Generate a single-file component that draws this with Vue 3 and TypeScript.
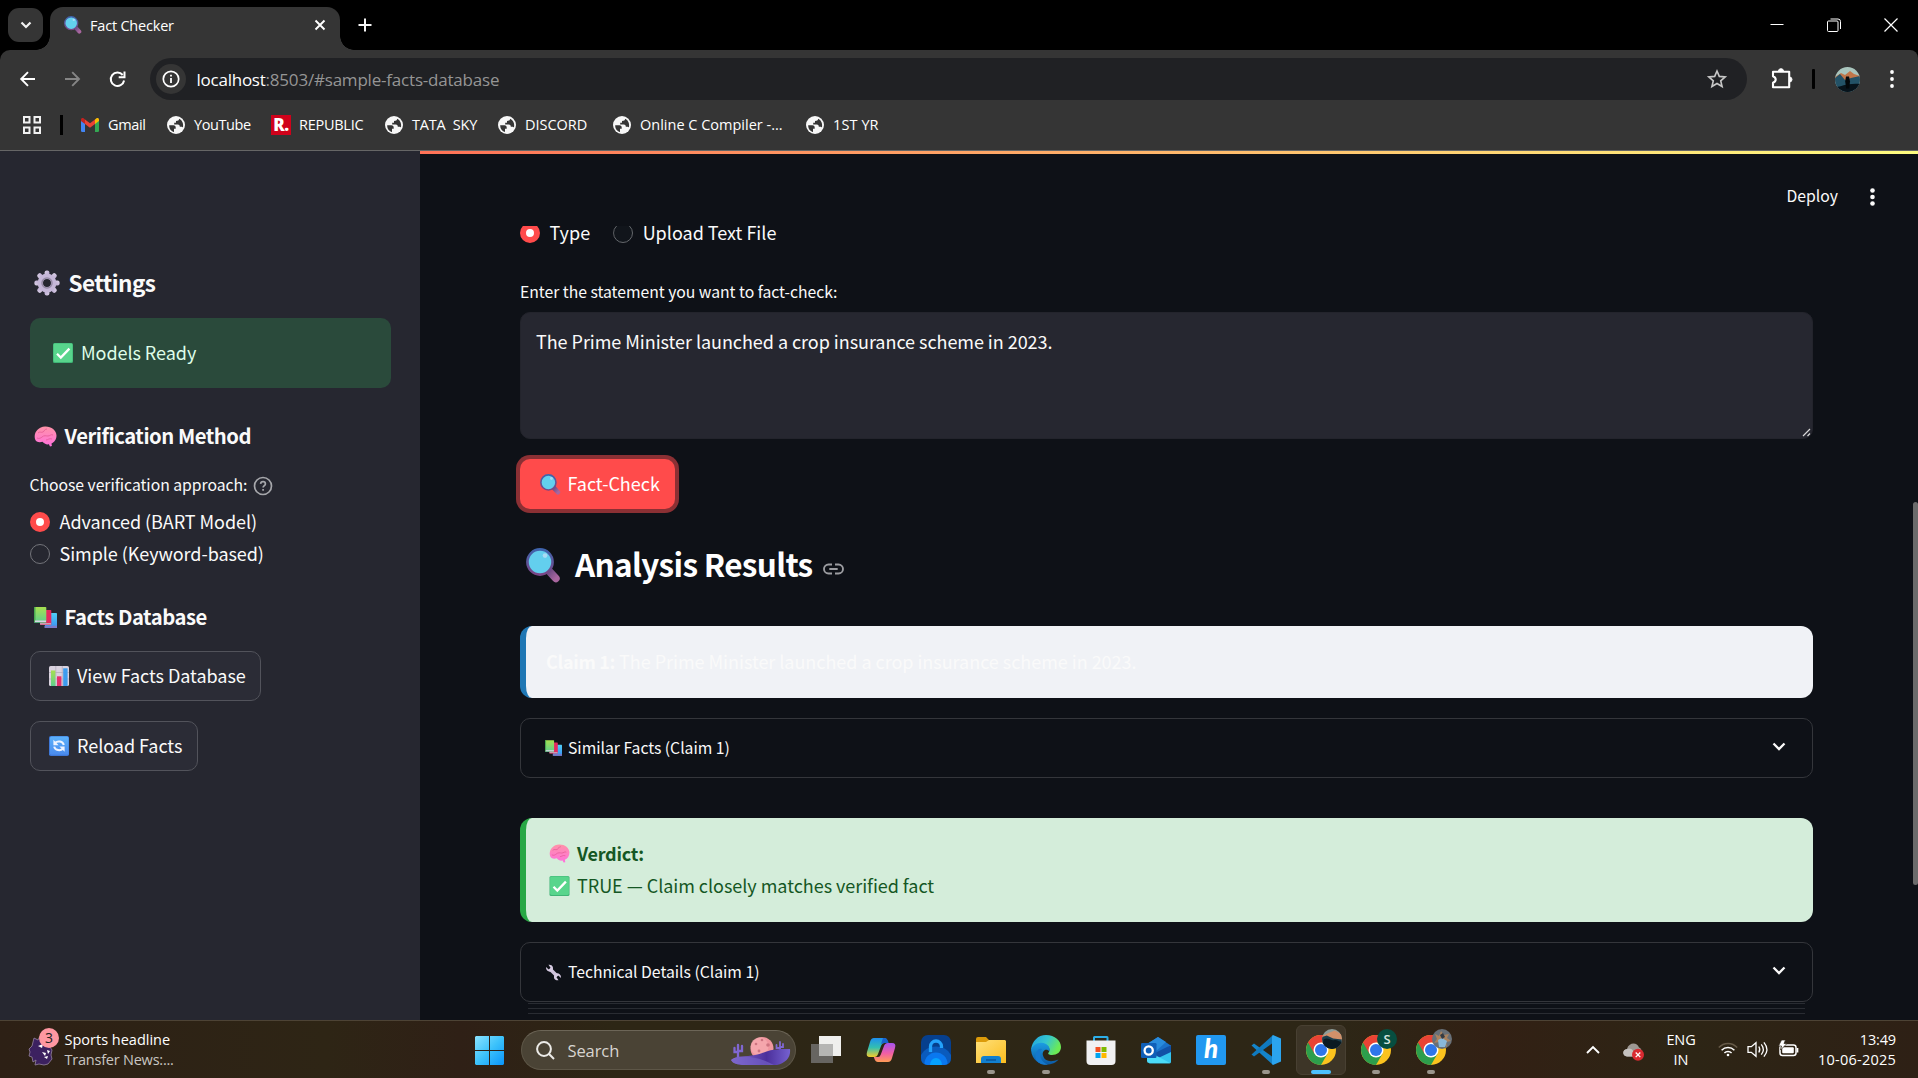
<script setup lang="ts">
interface Bookmark { label: string; icon: 'gmail' | 'globe' | 'republic'; width: number; spacing: number }
interface TaskApp { id: string; running?: boolean; active?: boolean }

const bookmarks: Bookmark[] = [
  { label: 'Gmail', icon: 'gmail', width: 86, spacing: -0.34 },
  { label: 'YouTube', icon: 'globe', width: 103, spacing: -0.4 },
  { label: 'REPUBLIC', icon: 'republic', width: 115, spacing: -0.26 },
  { label: 'TATA  SKY', icon: 'globe', width: 113, spacing: -0.18 },
  { label: 'DISCORD', icon: 'globe', width: 115, spacing: -0.04 },
  { label: 'Online C Compiler -...', icon: 'globe', width: 193, spacing: 0 },
  { label: '1ST YR', icon: 'globe', width: 90, spacing: 0.1 },
]

const tasks: TaskApp[] = [
  { id: 'view' }, { id: 'copilot' }, { id: 'lock' }, { id: 'folder', running: true },
  { id: 'edge', running: true }, { id: 'store' }, { id: 'outlook' }, { id: 'h' },
  { id: 'code', running: true }, { id: 'chrome1', active: true },
  { id: 'chrome2', running: true }, { id: 'chrome3', running: true },
]

const gearTeeth = [0, 45, 90, 135, 180, 225, 270, 315]
</script>

<template>
  <div class="screen">
    <!-- Shared glyphs -->
    <svg class="defs" width="0" height="0" aria-hidden="true">
      <defs>
        <linearGradient id="gHandle" x1="0" y1="0" x2="1" y2="1"><stop offset="0" stop-color="#6d4b84" /><stop offset="1" stop-color="#a8669f" /></linearGradient>
        <linearGradient id="gRim" x1="0" y1="0" x2="0" y2="1"><stop offset="0" stop-color="#3f64ad" /><stop offset="1" stop-color="#7a4686" /></linearGradient>
        <linearGradient id="gBrain" x1="0" y1="0" x2="0" y2="1"><stop offset="0" stop-color="#ff93a8" /><stop offset="1" stop-color="#ff70dc" /></linearGradient>
        <linearGradient id="gBook" x1="0" y1="0" x2="0" y2="1"><stop offset="0" stop-color="#a6df4f" /><stop offset="1" stop-color="#5fcf8e" /></linearGradient>
        <linearGradient id="gBlue" x1="0" y1="0" x2="0" y2="1"><stop offset="0" stop-color="#4fd0f7" /><stop offset="1" stop-color="#3a8ff0" /></linearGradient>
        <linearGradient id="gGear" x1="0" y1="0" x2="1" y2="1"><stop offset="0" stop-color="#d9d0e4" /><stop offset="1" stop-color="#b8a4d0" /></linearGradient>
        <linearGradient id="gSync" x1="0" y1="0" x2="0" y2="1"><stop offset="0" stop-color="#5cb2fb" /><stop offset="1" stop-color="#4a8bee" /></linearGradient>
        <linearGradient id="gWin" x1="0" y1="0" x2="1" y2="1"><stop offset="0" stop-color="#8be3ff" /><stop offset=".5" stop-color="#3cc2fb" /><stop offset="1" stop-color="#0a94fa" /></linearGradient>
        <linearGradient id="gEdge" x1="0" y1="0" x2="1" y2=".4"><stop offset="0" stop-color="#1d9fe0" /><stop offset=".55" stop-color="#35c6cf" /><stop offset="1" stop-color="#6bea55" /></linearGradient>
        <linearGradient id="gEdge2" x1="0" y1="0" x2="0" y2="1"><stop offset="0" stop-color="#1b9de2" /><stop offset="1" stop-color="#0c59a4" /></linearGradient>
        <linearGradient id="gFolder" x1="0" y1="0" x2="1" y2="1"><stop offset="0" stop-color="#ffe07a" /><stop offset="1" stop-color="#fbbd1e" /></linearGradient>
        <linearGradient id="gCopA" x1="0" y1="0" x2="0" y2="1"><stop offset="0" stop-color="#1d8ff0" /><stop offset=".5" stop-color="#33bfb0" /><stop offset="1" stop-color="#f6cc2a" /></linearGradient>
        <linearGradient id="gCopB" x1="0" y1="0" x2="0" y2="1"><stop offset="0" stop-color="#a653f0" /><stop offset=".55" stop-color="#f15fa4" /><stop offset="1" stop-color="#ff9c55" /></linearGradient>
        <linearGradient id="gDune" x1="0" y1="0" x2="1" y2="0"><stop offset="0" stop-color="#8b6fd6" /><stop offset=".6" stop-color="#4b2f9b" /><stop offset="1" stop-color="#7561d0" /></linearGradient>
        <clipPath id="cCircle"><circle cx="12.5" cy="12.5" r="12.5" /></clipPath>
        <symbol id="lens" viewBox="0 0 34 34">
          <path d="M22.5 22.5 29 29.5" stroke="url(#gHandle)" stroke-width="7.4" stroke-linecap="round" />
          <circle cx="13.6" cy="13.6" r="12.2" fill="#63cfee" stroke="url(#gRim)" stroke-width="2.6" />
          <circle cx="18.5" cy="7.3" r="2.3" fill="#a9dbf4" />
        </symbol>
        <symbol id="gear" viewBox="0 0 26 26">
          <g fill="url(#gGear)"><rect v-for="a in gearTeeth" :key="a" x="10.6" y="0.4" width="4.8" height="7" rx="2" :transform="`rotate(${a} 13 13)`" /></g>
          <circle cx="13" cy="13" r="6.7" fill="none" stroke="#c5b7d8" stroke-width="5.4" />
          <circle cx="13" cy="13" r="5" fill="none" stroke="#958aa5" stroke-width="1.5" />
        </symbol>
        <symbol id="check" viewBox="0 0 20 20">
          <rect width="20" height="20" rx="1.6" fill="#3fb476" /><rect x=".6" y=".6" width="18.8" height="18.3" rx="1.4" fill="#58d58c" />
          <path d="M4 10.8 7.8 14.5 16.4 5.6" fill="none" stroke="#fff" stroke-width="2.3" />
        </symbol>
        <symbol id="brain" viewBox="0 0 23 21">
          <path d="M1 13C-.6 7 4 .8 11 .5c6-.3 11.500 3.700 11.500 9 0 4.200-2.300 6.800-5 8l.4 2.600-1.900.3-1.100-2.100c-2.900.4-4.900-.7-6.400-2.500C5.500 16.800 1.800 16.200 1 13Z" fill="url(#gBrain)" />
          <path d="M4 7c2-2 3 0 5-1s1-3 4-3M8 11c2-2 4-1 6-1s3-2 5-1M3 12c2 1 4 0 5-1M12 14c2 0 3-2 6-1" fill="none" stroke="#e0558f" stroke-width="1" stroke-opacity=".7" />
        </symbol>
        <symbol id="books" viewBox="0 0 23 21">
          <rect x="11" y="6" width="12" height="15" rx=".8" fill="url(#gBlue)" /><rect x="10.500" y="18.700" width="12.500" height="2.300" fill="#7a7ac8" />
          <rect x="6" y="3" width="11.300" height="15" rx=".8" fill="#e5285f" /><rect x="6" y="16" width="11" height="1.600" fill="#c9a0b4" />
          <rect x="0" y="0" width="12.300" height="15.700" rx=".8" fill="url(#gBook)" /><rect x="0" y="0" width="1.500" height="15" fill="#4aa850" /><rect x="1" y="13.500" width="11" height="1.500" fill="#d9d5e6" />
        </symbol>
        <symbol id="chart" viewBox="0 0 20 20">
          <rect width="20" height="20" rx="1.600" fill="#d9d2de" /><path d="M0 6.500h20M0 13h20M6.800 0v20M13.300 0v20" stroke="#b5acbd" stroke-width=".8" />
          <rect x="2" y="4.500" width="4.400" height="15.500" fill="url(#gBook)" /><rect x="8" y="10.300" width="4.400" height="9.700" fill="#e5306d" /><rect x="14.200" y="2.300" width="4.400" height="17.700" fill="#3c9cee" />
        </symbol>
        <symbol id="sync" viewBox="0 0 20 20">
          <rect width="20" height="20" rx="1.800" fill="#3e78d8" /><rect x="1" y=".4" width="18.600" height="18.400" rx="1.600" fill="url(#gSync)" />
          <g fill="none" stroke="#eef4ff" stroke-width="2"><path d="M6 6.800c2.600-2.200 8-1.800 8.800 2.200" /><path d="M14 12.800c-2.600 2.200-8 1.800-8.800-2.200" /></g>
          <path d="M4.400 3.800v5.400h5.200ZM15.600 15.800v-5.400h-5.200Z" fill="#eef4ff" />
        </symbol>
        <symbol id="wrench" viewBox="0 0 18 18">
          <path d="M5 5 13 13" stroke="#cfc3dc" stroke-width="3.800" />
          <path d="M1 3.200 4 5.900l2-1.700L3.700.8C8 .2 9.700 4 7.700 7 5.500 9.300.8 7.900 1 3.200ZM17 14.800 14 12.100l-2 1.700 2.300 3.400c-4.300.6-6-3.200-4-6.200 2.200-2.300 6.900-.9 6.700 3.800Z" fill="#d6cbe2" />
        </symbol>
        <symbol id="globe" viewBox="0 0 18 18">
          <circle cx="9" cy="9" r="9" fill="#f7f7f7" />
          <path d="M2.200 9.300h4.300c1.500 0 2.200 1 2.200 2.200v1.300H7v3.300C4.200 15.200 2 12.800 2.200 9.300ZM12.200 2.800c-.2 1.500-1.200 2.200-3.200 2.200v1.800H7.200v1.700h3.600c1.500 0 2 1 2 2.200h1.800c.6 0 1.100.3 1.300.8.900-3.300-.3-7-3.700-8.700Z" fill="#353535" />
        </symbol>
        <symbol id="chrome" viewBox="0 0 30 30">
          <circle cx="15" cy="15" r="15" fill="#fcc31e" />
          <path d="M2.010 7.500A15 15 0 0 0 15 30l6.500-11.200L15 15Z" fill="#2d9e4c" />
          <path d="M2.010 7.500A15 15 0 0 1 28 7.500H15L8.500 18.700Z" fill="#ea4335" />
          <circle cx="15" cy="15" r="7.500" fill="#fff" /><circle cx="15" cy="15" r="6" fill="#2f76ea" />
        </symbol>
        <symbol id="photo" viewBox="0 0 25 25">
          <g clip-path="url(#cCircle)">
            <rect width="25" height="25" fill="#a9c5bd" /><path d="M0 10 6 6l4 2 5-4 4 3 6 2v6H0Z" fill="#c0764a" />
            <path d="M0 11 5 7l5 6 6-2 9-2v16H0Z" fill="#235267" /><path d="M0 20c7 0 11-4 25-3v8H0Z" fill="#07131b" /><path d="M11 9.500h3l1 5-.8 7h-3l-1-7Z" fill="#03070a" />
          </g>
        </symbol>
        <symbol id="photo2" viewBox="0 0 25 25">
          <g clip-path="url(#cCircle)">
            <rect width="25" height="25" fill="#8e9c98" /><path d="M0 9 8 5l8-3 9 5v8H0Z" fill="#d0906a" />
            <path d="M0 10 6 8l8 4 11 1v12H0Z" fill="#1b3d4c" /><path d="M2 13c6-3 9 2 13 1s6 2 10 2v9H0Z" fill="#0b1a22" />
          </g>
        </symbol>
      </defs>
    </svg>

    <!-- Browser chrome -->
    <header class="tabstrip">
      <button class="tab-search"><svg width="12" height="8" viewBox="0 0 12 8"><path d="m1.500 1.500 4.500 4.500 4.500-4.500" fill="none" stroke="#f2f2f2" stroke-width="2.200" /></svg></button>
      <div class="tab">
        <svg class="fav" width="18" height="18"><use href="#lens" /></svg>
        <span class="tab-title">Fact Checker</span>
        <svg class="tab-close" width="12" height="12" viewBox="0 0 12 12"><path d="m1.500 1.500 9 9m0-9-9 9" stroke="#fff" stroke-width="1.900" /></svg>
      </div>
      <svg class="newtab" width="14" height="14" viewBox="0 0 14 14"><path d="M7 .5v13M.5 7h13" stroke="#f5f5f5" stroke-width="2" /></svg>
      <div class="win">
        <svg width="14" height="14" viewBox="0 0 14 14"><path d="M.5 6.500h13" stroke="#fff" stroke-width="1" /></svg>
        <svg width="14" height="14" viewBox="0 0 14 14" fill="none" stroke="#fff"><rect x=".5" y="3" width="10.500" height="10.500" rx="1" /><path d="M3.500 1H11q2.500 0 2.500 2.500V11" /></svg>
        <svg width="14" height="14" viewBox="0 0 14 14"><path d="m.5.500 13 13m0-13-13 13" stroke="#fff" stroke-width="1.200" /></svg>
      </div>
    </header>

    <div class="chrome-body">
      <div class="toolbar">
        <svg class="nav" width="16" height="16" viewBox="0 0 16 16" fill="none" stroke="#fff" stroke-width="1.900"><path d="M15 8H1.500M8 1.200 1.200 8 8 14.800" /></svg>
        <svg class="nav" width="16" height="16" viewBox="0 0 16 16" fill="none" stroke="#858585" stroke-width="1.900"><path d="M0 8h13.700M7.200 1.200 14 8l-6.800 6.800" /></svg>
        <svg class="nav" width="16" height="16" viewBox="0 0 16 16" fill="none" stroke="#fff" stroke-width="2"><path d="M12.700 4A6.700 6.700 0 1 0 14.100 9.500" /><path d="M14.500.5v5.800H8.700" /></svg>
        <div class="omnibox">
          <span class="info"><svg width="18" height="18" viewBox="0 0 18 18"><circle cx="9" cy="9" r="7.700" fill="none" stroke="#fff" stroke-width="1.700" /><path d="M9 8v5M9 4.800v1.800" stroke="#fff" stroke-width="1.800" /></svg></span>
          <span class="url"><span class="host">localhost</span><span class="path">:8503/#sample-facts-database</span></span>
          <svg class="star" width="20" height="20" viewBox="0 0 20 20"><path d="m10 2 2.300 5.400 5.900.5-4.500 3.900 1.400 5.700-5.100-3-5.100 3 1.400-5.700-4.500-3.900 5.900-.5Z" fill="none" stroke="#c7c7c7" stroke-width="1.600" /></svg>
        </div>
        <svg class="puzzle" width="22" height="22" viewBox="0 0 22 22"><path d="M2 3.700h16.200v15.600H2v-4.600c3.600-1.700 3.600-4.900 0-6.500Z" fill="none" stroke="#fff" stroke-width="2.100" stroke-linejoin="round" /><path d="M7.500 3.200a2.500 2.500 0 0 1 5 0ZM18.500 9a2.500 2.500 0 0 1 0 5Z" fill="#fff" stroke="#fff" /></svg>
        <i class="bar"></i>
        <svg class="avatar" width="25" height="25"><use href="#photo" /></svg>
        <svg class="menu" width="4" height="18" viewBox="0 0 4 18" fill="#fff"><circle cx="2" cy="2" r="1.900" /><circle cx="2" cy="9" r="1.900" /><circle cx="2" cy="16" r="1.900" /></svg>
      </div>
      <div class="bookmarks">
        <svg class="apps" width="18" height="18" viewBox="0 0 18 18" fill="none" stroke="#f2f2f2" stroke-width="2"><path d="M1 1h5.500v5.500H1ZM11.500 1H17v5.500h-5.500ZM1 11.500h5.500V17H1ZM11.500 11.500H17V17h-5.500Z" /></svg>
        <i class="bsep"></i>
        <div v-for="b in bookmarks" :key="b.label" class="bm" :style="{ width: b.width + 'px' }">
          <svg v-if="b.icon === 'gmail'" class="bi" width="18" height="14" viewBox="0 0 18 14"><path d="M0 2.500v10.300q0 1.200 1.200 1.200H4V5Z" fill="#4285f4" /><path d="M18 2.500v10.300q0 1.200-1.200 1.200H14V5Z" fill="#34a853" /><path d="M14 1.500V6l4-3V1.800C18 .2 16.500-.5 15.200.5Z" fill="#fbbc04" /><path d="M4 1.500V6L0 3V1.800C0 .2 1.500-.5 2.800.5Z" fill="#c5221f" /><path d="M4 1.500 9 5.300l5-3.800V6L9 9.800 4 6Z" fill="#ea4335" /></svg>
          <span v-else-if="b.icon === 'republic'" class="rep">R.</span>
          <svg v-else class="bi" width="18" height="18"><use href="#globe" /></svg>
          <span :style="{ letterSpacing: b.spacing + 'px' }">{{ b.label }}</span>
        </div>
      </div>
    </div>

    <!-- Streamlit page -->
    <div class="page">
      <aside class="side">
        <h2 class="s-title"><svg width="26" height="26"><use href="#gear" /></svg><span>Settings</span></h2>
        <div class="ready"><svg width="20" height="20"><use href="#check" /></svg><span>Models Ready</span></div>
        <h3 class="s-sub vm"><svg width="23" height="21"><use href="#brain" /></svg><span>Verification Method</span></h3>
        <div class="s-label">
          <span>Choose verification approach:</span>
          <svg width="20" height="20" viewBox="0 0 20 20" fill="none" stroke="#a6a7ab" stroke-width="1.700"><circle cx="10" cy="10" r="8.500" /><path d="M7.600 7.900c.2-3 4.800-3 4.800 0 0 1.600-2.300 1.800-2.300 3.600M10.100 12.900v1.800" /></svg>
        </div>
        <label class="radio r1"><i class="dot on"></i><span>Advanced (BART Model)</span></label>
        <label class="radio"><i class="dot"></i><span>Simple (Keyword-based)</span></label>
        <h3 class="s-sub fd"><svg width="23" height="21"><use href="#books" /></svg><span>Facts Database</span></h3>
        <button class="btn b1"><svg width="20" height="20"><use href="#chart" /></svg><span>View Facts Database</span></button>
        <button class="btn b2"><svg width="20" height="20"><use href="#sync" /></svg><span>Reload Facts</span></button>
      </aside>

      <main class="main">
        <div class="deco"></div>
        <div class="appbar">
          <span>Deploy</span>
          <svg width="5" height="18" viewBox="0 0 5 18" fill="#fafafa"><circle cx="2.500" cy="2.500" r="2.300" /><circle cx="2.500" cy="9" r="2.300" /><circle cx="2.500" cy="15.500" r="2.300" /></svg>
        </div>
        <div class="scroll">
          <div class="content">
            <div class="choices">
              <label class="radio"><i class="dot on"></i><span>Type</span></label>
              <label class="radio"><i class="dot dk"></i><span>Upload Text File</span></label>
            </div>
            <div class="field-label">Enter the statement you want to fact-check:</div>
            <div class="area">
              <span>The Prime Minister launched a crop insurance scheme in 2023.</span>
              <svg class="grip" width="9" height="9" viewBox="0 0 9 9"><path d="M1 8 8 1M5.500 8 8 5.500" stroke="#d8d8d8" stroke-width="1.200" /></svg>
            </div>
            <button class="primary"><svg width="21" height="21"><use href="#lens" /></svg><span>Fact-Check</span></button>
            <h2 class="heading">
              <svg class="big" width="35" height="35"><use href="#lens" /></svg><span>Analysis Results</span>
              <svg class="link" width="21" height="12" viewBox="0 0 21 12" fill="none" stroke="#9c9da1" stroke-width="1.900"><path d="M9 1.500H5.500a4.500 4.500 0 0 0 0 9H9M12 1.500h3.500a4.500 4.500 0 0 1 0 9H12M6.300 6h8.400" /></svg>
            </h2>
            <div class="claim"><b>Claim 1:</b><span>The Prime Minister launched a crop insurance scheme in 2023.</span></div>
            <div class="expander e1">
              <svg width="17" height="16"><use href="#books" /></svg><span>Similar Facts (Claim 1)</span>
              <svg class="chev" width="14" height="9" viewBox="0 0 14 9"><path d="m1.500 1.500 5.500 5.500 5.500-5.500" fill="none" stroke="#fafafa" stroke-width="2.300" /></svg>
            </div>
            <div class="verdict">
              <div><svg width="21" height="19"><use href="#brain" /></svg><b>Verdict:</b></div>
              <div><svg width="20" height="20"><use href="#check" /></svg><span>TRUE — Claim closely matches verified fact</span></div>
            </div>
            <div class="expander e2">
              <svg width="17" height="17"><use href="#wrench" /></svg><span>Technical Details (Claim 1)</span>
              <svg class="chev" width="14" height="9" viewBox="0 0 14 9"><path d="m1.500 1.500 5.500 5.500 5.500-5.500" fill="none" stroke="#fafafa" stroke-width="2.300" /></svg>
            </div>
            <div class="stack"><i></i><i></i><i></i></div>
          </div>
        </div>
        <i class="thumb"></i>
      </main>
    </div>

    <!-- Windows taskbar -->
    <footer class="taskbar">
      <div class="widget">
        <div class="lion">
          <svg width="26" height="32" viewBox="0 0 26 32"><path d="m7 4 4 2 2-4 3 4 5 4 4 6-1 5 1 4-4 5-4 1-5-1-4 1 1-5-3 2-1-5-3-1 1-4-1-3 3-3 1-4Z" fill="#3c2160" stroke="#95849f" stroke-width=".8" /><path d="m11 12 5-2-1 4ZM15 18l4 1-1 3ZM20 16l3 1-2 3ZM17 23l4-1-1 3Z" fill="#fff" /></svg>
          <span class="badge">3</span>
        </div>
        <div class="news"><span class="n1">Sports headline</span><span class="n2">Transfer News:...</span></div>
      </div>
      <svg class="start" width="29" height="29" viewBox="0 0 29 29" fill="url(#gWin)"><path d="M1 0h13v14H0V1ZM15 0h13l1 1v13H15ZM0 15h14v14H1l-1-1ZM15 15h14v13l-1 1H15Z" /></svg>
      <div class="search">
        <svg width="19" height="19" viewBox="0 0 19 19" fill="none" stroke="#ecebe8" stroke-width="2"><circle cx="8" cy="8" r="6.900" /><path d="m12.800 12.800 5.200 5.200" /></svg>
        <span>Search</span>
        <svg class="scene" width="62" height="30" viewBox="0 0 62 30">
          <circle cx="32" cy="12.500" r="11.500" fill="#f0969f" /><circle cx="29.500" cy="10.500" r="9" fill="#f8b0b6" fill-opacity=".6" /><g fill="#cd7480"><circle cx="32" cy="4" r="1.300" /><circle cx="38" cy="9" r="1.800" /><circle cx="26" cy="8" r="1.300" /><circle cx="29" cy="15" r="1.400" /></g>
          <g fill="none" stroke="#8067d2" stroke-width="2.300" stroke-linecap="round"><path d="M8 21V9M4.500 12v4H8M12 10v5H8" /><path d="M50 15V6M46.500 9v3H50M53 8v3h-3" stroke-width="1.800" /></g>
          <path d="M1 24c5-5 15-3 24-5 8-1 12-7 35-6 1 8-4 14-13 16H12C5 28 3 27 1 24Z" fill="url(#gDune)" /><path d="M1 24c10-5 24-5 43 5H12C5 28 3 27 1 24Z" fill="#7764c8" fill-opacity=".65" />
        </svg>
      </div>
      <div class="apps-row">
        <div v-for="t in tasks" :key="t.id" class="cell">
          <div class="tile" :class="{ active: t.active }">
            <svg v-if="t.id === 'view'" width="30" height="30" viewBox="0 0 30 30"><path d="M8 1h22v20H8Z" fill="#efefed" /><path d="M0 9h22v19H0Z" fill="#777" fill-opacity=".78" /><path d="M8 9h14v12H8Z" fill="#b5b5b3" /></svg>
            <svg v-else-if="t.id === 'copilot'" width="30" height="28" viewBox="0 0 30 28"><path d="M8 2h10q2.500 0 3.500 3l.7 2H18q-2 0-2.800 2.500l-3 8q-1 3.500-4 3.500H4q-4.500 0-3-5L4 6q1-4 4-4Z" fill="url(#gCopA)" /><path d="M17 2h2q2 0 3 3l.7 2H18l-3 1Z" fill="#1763cf" /><path d="M22 26H12q-2.500 0-3.500-3l-.7-2H12q2 0 2.800-2.500l3-8q1-3.500 4-3.500H26q4.500 0 3 5l-3 10q-1 4-4 4Z" fill="url(#gCopB)" /></svg>
            <svg v-else-if="t.id === 'lock'" width="30" height="30" viewBox="0 0 30 30"><rect width="30" height="30" rx="7" fill="#063f8d" /><path d="M0 20a16 13 0 0 1 30 0v3q0 7-7 7H7q-7 0-7-7Z" fill="#0a5bbd" /><path d="M9.500 17v-5.500a5.500 5.500 0 0 1 11 0V13" fill="none" stroke="#23a2fb" stroke-width="3.300" /><path d="M3.500 29a11.500 11.500 0 0 1 23 0l-3 1h-17Z" fill="#0a78f0" /><path d="M9 30a6 7 0 0 1 12 0Z" fill="#05a2ff" /></svg>
            <svg v-else-if="t.id === 'folder'" width="30" height="28" viewBox="0 0 30 28"><path d="M0 3q0-2 2-2h8l3 3h16v9H0Z" fill="#dc9b0a" /><path d="M0 6h10l3-2h16l1 1v22H0Z" fill="url(#gFolder)" /><path d="M5 27v-4q0-3 3-3h14q3 0 3 3v4Z" fill="#1280cf" /><path d="M10 24h10" stroke="#0a4f92" stroke-width="1.300" /></svg>
            <svg v-else-if="t.id === 'edge'" width="30" height="30" viewBox="0 0 30 30"><path d="M0 15C1 6 7 0 15 0c9 0 15 6 15 12 0 5-4 8-9 8-3 0-5-1-3-3 3-7-10-12-18-2Z" fill="url(#gEdge)" /><path d="M0 15c2-6 9-9 15-6 3 1.500 4.500 5 3.500 7.500-3-4-8-1-6.500 4 1.500 6 8 7 15.500 4C22 32 2 33 0 15Z" fill="url(#gEdge2)" /><path d="M11 14c-4 6-1 13 6 15.700C8 31 1 24 6 16q2-3 5-2Z" fill="#1478cc" /></svg>
            <svg v-else-if="t.id === 'store'" width="30" height="30" viewBox="0 0 30 30"><path d="M8 6V2.500Q8 2 8.500 2h12.500q.5 0 .5.500V6" fill="none" stroke="#2dafe8" stroke-width="2" /><path d="M.5 5.500h29V26q0 4-4 4h-21q-4 0-4-4Z" fill="#f1f1f2" /><path d="M9.500 12h5v5h-5Z" fill="#f25022" /><path d="M15.500 12h5v5h-5Z" fill="#7fba00" /><path d="M9.500 18h5v5h-5Z" fill="#00a4ef" /><path d="M15.500 18h5v5h-5Z" fill="#ffb900" /></svg>
            <svg v-else-if="t.id === 'outlook'" width="30" height="28" viewBox="0 0 30 28"><path d="m17 1 12 8v8L6 20V8Z" fill="#1a70c8" /><path d="m17 1 8 5L14 16 6 14V8Z" fill="#288bdc" /><path d="M30 9v17q0 1-1.500 1.500H8L17 18Z" fill="#34c4ee" /><path d="M30 9v7L13 24l-3-5Z" fill="#1150a6" /><path d="M6 19h8l15 8H8q-2 0-2-2Z" fill="#4bdcf8" /><rect y="7" width="15.500" height="15" rx="1.200" fill="#0f5fb8" /><circle cx="7.700" cy="14.500" r="4.100" fill="none" stroke="#fff" stroke-width="2.300" /></svg>
            <span v-else-if="t.id === 'h'" class="htile">h</span>
            <svg v-else-if="t.id === 'code'" width="30" height="30" viewBox="0 0 30 30"><path d="M.5 10.500 3 8.500 23 23l-1 7Z" fill="#1484ca" /><path d="M.5 19.500 3 21.500 23 7 22 0Z" fill="#107abf" /><path d="m22 0 8 3.500v23L22 30l-1-1.500V1.500Z" fill="#2ba4ee" /></svg>
            <svg v-else class="ch" width="30" height="30"><use href="#chrome" /></svg>
            <svg v-if="t.id === 'chrome1'" class="who" width="20" height="20"><use href="#photo2" /></svg>
            <span v-else-if="t.id === 'chrome2'" class="who s">S</span>
            <svg v-else-if="t.id === 'chrome3'" class="who" width="20" height="20" viewBox="0 0 20 20"><circle cx="10" cy="10" r="10" fill="#687078" /><path d="m3 5 4 2 2-5 3 4 5-1-2 4 4 3-5 1 1 5-4-3-4 3V13l-5 1 3-4Z" fill="#a9825f" /><path d="m6 11 4-2 5 3-2 6H7Z" fill="#89b8d9" /><path d="m8 6 3-2 2 4-3 2Z" fill="#343b43" /></svg>
            <i v-if="t.running || t.active" class="ind" :class="{ wide: t.active }"></i>
          </div>
        </div>
      </div>
      <div class="tray">
        <svg class="up" width="14" height="9" viewBox="0 0 14 9"><path d="M1 8 7 2l6 6" fill="none" stroke="#fff" stroke-width="1.900" /></svg>
        <svg class="cloud" width="21" height="18" viewBox="0 0 21 18"><path d="M4 13.500C-1 13-1 6.500 4 6c1.500-6.500 10-7.500 12-1.500 3 1 3.500 5 2 9Z" fill="#9d9893" /><path d="M4 13.500C-1 13-1 6.500 4 6c4-2 8 2 7 7.500Z" fill="#c5c2bf" /><circle cx="15" cy="11.800" r="6" fill="#d92a31" /><path d="m12.700 9.500 4.600 4.600m0-4.600-4.600 4.600" stroke="#fff" stroke-width="1.300" /></svg>
        <div class="lang"><span>ENG</span><span>IN</span></div>
        <svg class="wifi" width="20" height="15" viewBox="0 0 20 15" fill="none" stroke="#fff" stroke-width="1.500"><path d="M.8 5.500a12.500 12.500 0 0 1 18.400 0" stroke="#665a48" /><path d="M3.600 8.200a9 9 0 0 1 12.800 0M6.400 11a5 5 0 0 1 7.200 0" /><circle cx="10" cy="13" r="1.300" fill="#fff" stroke="none" /></svg>
        <svg class="vol" width="21" height="17" viewBox="0 0 21 17" fill="none" stroke="#fff" stroke-width="1.300"><path d="M1 5.700h3.300L9 1.700v13.600l-4.700-4H1ZM11.800 5.500q2 3 0 6M14.300 3.300q4 5.200 0 10.400M16.900 1.300q6 7.200 0 14.400" /></svg>
        <svg class="bat" width="21" height="17" viewBox="0 0 21 17"><rect x="2" y="5" width="16" height="10.500" rx="2.500" fill="none" stroke="#fff" stroke-width="1.500" /><rect x="4.200" y="7.200" width="11.600" height="6.100" rx="1" fill="#fff" /><path d="M19.500 8v4.500" stroke="#fff" stroke-width="1.700" /><path d="M3.500 0h4L6 3.500h3L2.500 10l1-4H.5Z" fill="#fff" stroke="#2d2415" stroke-width=".7" /></svg>
        <div class="clock"><span class="hm">13:49</span><span class="dt">10-06-2025</span></div>
      </div>
    </footer>
  </div>
</template>

<style>
html, body { margin: 0; background: #0e1117; overflow: hidden; }
</style>

<style scoped>
* { box-sizing: border-box; }
svg { display: block; flex: none; overflow: visible; }
.defs { position: absolute; }
.screen { width: 1918px; height: 1078px; display: flex; flex-direction: column; background: #000; overflow: hidden; font-family: "Open Sans", "Noto Sans", sans-serif; color: #fff; }
button { border: 0; padding: 0; margin: 0; font: inherit; color: inherit; }
i { display: block; flex: none; }

/* tab strip */
.tabstrip { height: 50px; flex: none; display: flex; background: #000; }
.tab-search { width: 35px; height: 34px; margin: 8px 7px 0 8px; border-radius: 11px; background: #353535; display: flex; align-items: center; justify-content: center; }
.tab { position: relative; width: 290px; height: 43px; margin-top: 7px; padding: 0 14px; border-radius: 13px 13px 0 0; background: #353535; display: flex; align-items: flex-start; }
.tab::before, .tab::after { content: ""; position: absolute; bottom: 0; width: 14px; height: 14px; }
.tab::before { left: -14px; background: radial-gradient(circle at 0 0, transparent 13.500px, #353535 14px); }
.tab::after { right: -14px; background: radial-gradient(circle at 100% 0, transparent 13.500px, #353535 14px); }
.fav { margin-top: 9px; }
.tab-title { margin: 5px 0 0 8px; font-size: 14.500px; line-height: 28px; letter-spacing: -.2px; }
.tab-close { margin: 12px 0 0 auto; }
.newtab { margin: 18px 0 0 18px; }
.win { margin: 17.500px 20px 0 auto; display: flex; gap: 43px; }

/* toolbar */
.chrome-body { height: 101px; flex: none; background: #353535; border-radius: 10px 8px 0 0; border-bottom: 1px solid #666; }
.toolbar { height: 50px; display: flex; align-items: center; padding: 8px 0 0 20px; }
.nav { margin-right: 29px; }
.nav + .nav + .nav { margin-right: 24px; }
.omnibox { width: 1597px; height: 42px; border-radius: 21px; background: #202124; display: flex; align-items: center; padding: 0 20px 0 6px; }
.info { width: 30px; height: 30px; border-radius: 50%; background: #353535; display: flex; align-items: center; justify-content: center; }
.url { margin: 1px 0 0 10.500px; font-size: 17px; line-height: 30px; }
.host { letter-spacing: -.24px; }
.path { color: #959595; letter-spacing: -.2px; }
.star { margin-left: auto; }
.puzzle { margin-left: 23.500px; }
.bar { width: 3px; height: 20px; margin-left: 19px; background: #000; border-radius: 1px; }
.avatar { margin-left: 20px; }
.menu { margin-left: 30.500px; }
.bookmarks { height: 50px; display: flex; align-items: center; font-size: 14.500px; line-height: 30px; padding-left: 23px; }
.bsep { width: 3px; height: 20px; margin: 0 18px 0 19px; background: #000; }
.bm { display: flex; align-items: center; flex: none; white-space: pre; }
.bi { margin-right: 9px; }
.rep { width: 20px; height: 20px; margin: 0 8px 0 1px; background: #d0021b; color: #fff; font: 800 17px/19px "Open Sans", sans-serif; text-align: center; letter-spacing: -.5px; }

/* page */
.page { height: 869px; flex: none; display: flex; font: 18px/30px "Noto Sans CJK SC", "Open Sans", sans-serif; color: #fafafa; background: #0e1117; }
h2, h3 { margin: 0; font-weight: 700; display: flex; align-items: center; }
.side { width: 420px; background: #262730; padding: 0 0 0 30px; }
.s-title { height: 30px; margin-top: 117px; padding-left: 3.500px; font-size: 22.500px; letter-spacing: -.52px; }
.s-title span { margin: -2px 0 0 9px; }
.ready { width: 361px; height: 70px; margin-top: 20px; border-radius: 10px; background: #2a4a3b; color: #dffde9; display: flex; align-items: center; padding: 0 23px; letter-spacing: -.05px; }
.ready span { margin: -2px 0 0 8px; }
.s-sub { height: 30px; padding-left: 3.500px; font-size: 20.250px; letter-spacing: -.47px; }
.s-sub span { margin-left: 8px; }
.vm { margin-top: 33px; }
.s-label { height: 24px; margin-top: 22px; display: flex; align-items: center; font-size: 15.750px; line-height: 24px; letter-spacing: -.04px; }
.s-label svg { margin-left: 6px; margin-top: 1px; }
.s-label span { margin-left: -.5px; }
.radio { display: flex; align-items: center; height: 32px; letter-spacing: -.06px; }
.radio span { margin-top: -2px; }
.r1 { margin-top: 9px; }
.dot { width: 20px; height: 20px; border-radius: 50%; border: 1px solid #73747a; margin-right: 9.500px; }
.dot.dk { border-color: #65686c; background: #11151b; }
.dot.on { border: 6px solid #ff4b4b; background: #fff; }
.fd { margin-top: 33px; }
.fd span { margin-top: -2px; }
.fd svg { margin-top: -1px; }
.btn { display: flex; align-items: center; height: 50px; border: 1px solid #52535b; border-radius: 10px; background: #2b2c36; padding-left: 18px; letter-spacing: -.03px; }
.btn span { margin: -2px 0 0 8px; }
.b1 { width: 231px; margin-top: 18px; }
.b2 { width: 168px; margin-top: 20px; }

.main { position: relative; width: 1498px; display: flex; flex-direction: column; }
.deco { height: 3px; width: 1498px; background: linear-gradient(90deg, #ff7257, #fffd80); flex: none; }
.appbar { height: 72px; flex: none; display: flex; justify-content: flex-end; align-items: center; padding: 13px 43px 0 0; font-size: 15.750px; line-height: 24px; }
.appbar svg { margin-left: 32px; }
.appbar span { margin-top: -1px; }
.scroll { height: 794px; padding-left: 100px; }
.content { width: 1293px; display: flex; flex-direction: column; margin-top: -9px; }
.choices { display: flex; gap: 23px; }
.choices .dot { clip-path: inset(3px 0 0 0); }
.choices .radio { letter-spacing: 0; }
.field-label { height: 24px; margin-top: 31px; font-size: 15.750px; line-height: 24px; letter-spacing: -.03px; }
.area { position: relative; height: 127px; margin-top: 8px; border-radius: 10px; background: #262730; padding: 14px 15px; letter-spacing: -.045px; border: 1px solid #23242c; }
.area span { display: block; margin-top: -1px; }
.grip { position: absolute; right: 1px; bottom: 1px; }
.primary { width: 155px; height: 50px; margin-top: 20px; border-radius: 10px; background: #ff4b4b; box-shadow: 0 0 0 4px #8b3034; display: flex; align-items: center; padding-left: 20px; color: #fff; }
.primary span { margin: -2px 0 0 6.500px; }
.heading { height: 40px; margin-top: 35px; padding-left: 6px; font-size: 31.500px; line-height: 40px; letter-spacing: -.68px; color: #fff; }
.heading span { margin: -2px 0 0 14px; }
.big { margin-top: 3px; }
.link { margin: 9px 0 0 10px; }
.claim { height: 72px; margin-top: 42px; border-radius: 12px; border-left: 6px solid #1f77b4; background: #f0f2f6; padding: 20px; display: flex; letter-spacing: -.03px; }
.claim b { margin-right: 4px; letter-spacing: -.3px; }
.expander { height: 60px; border: 1px solid #34363b; border-radius: 10px; display: flex; align-items: center; padding: 0 26px 0 23.500px; font-size: 15.750px; line-height: 24px; letter-spacing: -.02px; }
.expander span { margin: 0 0 0 6.500px; }
.chev { margin: -3px 0 0 auto; }
.e1, .e2 { margin-top: 20px; }
.verdict { height: 104px; margin-top: 40px; border-radius: 12px; border-left: 6px solid #28a745; background: #d4edda; color: #155724; padding: 19px 23px; line-height: 32px; }
.verdict div { display: flex; align-items: center; letter-spacing: -.035px; }
.verdict svg { width: 21px; margin-top: 1px; }
.verdict b, .verdict span { margin-left: 7px; }
.verdict b { letter-spacing: -.25px; }
.stack { display: flex; flex-direction: column; gap: 4px; padding: 1px 8px 0; }
.stack i { height: 1px; background: #292c32; }
.thumb { position: absolute; right: 0; top: 351px; width: 5px; height: 383px; border-radius: 3px; background: #6b6b6b; }

/* taskbar */
.taskbar { height: 58px; flex: none; border-top: 1px solid #4d4335; display: flex; align-items: center; background: linear-gradient(90deg, #2d2015 0, #2e2515 17%, #2f2016 24%, #2d2615 32%, #2d2616 70%, #322014 78%, #2d2515 88%, #2e2015 100%); font-size: 14.500px; line-height: 20px; }
.widget { width: 475px; display: flex; }
.lion { position: relative; width: 37px; height: 40px; padding: 4px 0 0 27px; }
.badge { position: absolute; left: 39px; top: -2px; width: 20px; height: 20px; border-radius: 50%; background: #ff97a1; color: #222; text-align: center; font-size: 14px; line-height: 20px; }
.news { display: flex; flex-direction: column; margin-left: 27.500px; }
.n2 { color: #c9c6c2; letter-spacing: -.22px; }
.start { margin-right: 17px; margin-top: 1px; }
.search { width: 275px; height: 40px; margin: 1px 2.500px 0 0; border-radius: 20px; border: 1px solid #5d5647; border-top-color: #6c6557; background: #4a4335; display: flex; align-items: center; padding: 0 3px 0 14px; font-size: 16.500px; color: #d8d5d0; }
.search span { margin: 1px 0 0 12.500px; letter-spacing: -.1px; }
.scene { margin: 2px 0 0 auto; }
.apps-row { display: flex; }
.cell { width: 55px; height: 57px; display: flex; align-items: center; justify-content: center; }
.tile { position: relative; width: 50px; height: 50px; margin-top: 1px; display: flex; align-items: center; justify-content: center; border-radius: 6px; border: 1px solid transparent; }
.tile.active { background: #3d3527; border-color: #484032; }
.who { position: absolute; left: 25px; top: 3px; border-radius: 50%; }
.who.s { width: 20px; height: 20px; background: #064e40; color: #d5e3df; text-align: center; font-size: 13px; line-height: 20px; font-weight: 600; }
.htile { width: 30px; height: 30px; border-radius: 2px; background: #2198f0; font: italic 900 26px/27px Lato, sans-serif; text-align: center; }
.ind { position: absolute; bottom: 0; left: 50%; width: 8px; height: 4px; margin-left: -4px; border-radius: 2px; background: #9a958c; }
.ind.wide { width: 20px; margin-left: -10px; background: #4cc2ff; }
.tray { margin-left: auto; display: flex; align-items: center; padding-right: 22px; }
.cloud { margin-left: 23px; margin-top: 4px; }
.lang { width: 40px; margin-left: 17px; display: flex; flex-direction: column; align-items: center; letter-spacing: -.1px; }
.wifi { margin-left: 17px; }
.vol { margin-left: 9px; }
.bat { margin-left: 10px; margin-top: -2px; }
.clock { width: 97px; display: flex; flex-direction: column; align-items: flex-end; }
.hm { letter-spacing: -.15px; }
.dt { letter-spacing: .23px; }
</style>
